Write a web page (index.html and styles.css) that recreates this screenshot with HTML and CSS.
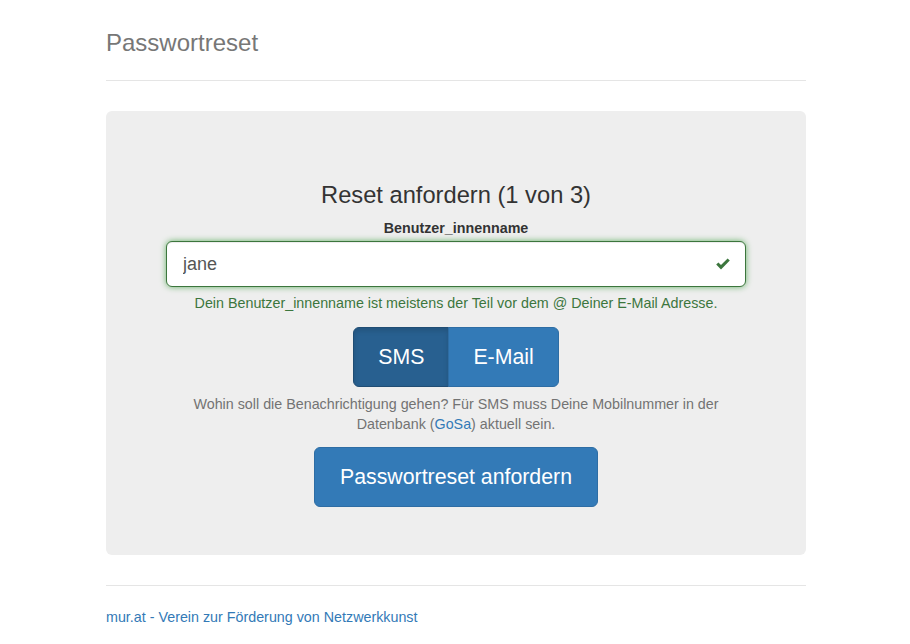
FILE: index.html
```html
<!DOCTYPE html>
<html lang="de">
<head>
<meta charset="utf-8">
<title>Passwortreset</title>
<link rel="stylesheet" href="styles.css">
</head>
<body>
<div class="container">
  <div class="header">
    <h3 class="title">Passwortreset</h3>
  </div>
  <div class="jumbotron">
    <h3 class="step">Reset anfordern (1 von 3)</h3>
    <div class="form-group first">
      <label class="label" for="user">Benutzer_innenname</label>
      <div class="input-wrap">
        <input id="user" class="input" type="text" value="jane">
        <span class="feedback">
          <svg width="16" height="14" viewBox="0 0 16 14"><path d="M1.2 7.6 L3.4 5.4 L6 8 L12.6 1.4 L14.8 3.6 L6 12.4 Z" fill="#3c763d"/></svg>
        </span>
      </div>
      <p class="help success">Dein Benutzer_innenname ist meistens der Teil vor dem @ Deiner E-Mail Adresse.</p>
    </div>
    <div class="form-group tight">
      <div class="btn-group">
        <button class="btn btn-primary active left" type="button">SMS</button><button class="btn btn-primary right" type="button">E-Mail</button>
      </div>
      <p class="help muted">Wohin soll die Benachrichtigung gehen? Für SMS muss Deine Mobilnummer in der Datenbank (<a href="#">GoSa</a>) aktuell sein.</p>
    </div>
    <button class="btn btn-primary" type="button">Passwortreset anfordern</button>
  </div>
  <footer class="footer">
    <p><a href="#">mur.at - Verein zur Förderung von Netzwerkkunst</a></p>
  </footer>
</div>
</body>
</html>
```
FILE: styles.css
```css
* { box-sizing: border-box; }
html, body { margin: 0; padding: 0; }
body {
  font-family: "Liberation Sans", Arial, Helvetica, sans-serif;
  font-size: 14.3px;
  line-height: 20px;
  color: #333;
  background: #fff;
  padding-top: 20px;
}
a { color: #337ab7; text-decoration: none; }
.container { width: 702px; padding-left: 2px; margin: 0 auto; }
.header {
  padding-top: 3px;
  padding-bottom: 17px;
  border-bottom: 1px solid #e5e5e5;
  margin-bottom: 30px;
}
.title {
  margin: 0;
  font-size: 24px;
  font-weight: 500;
  line-height: 40px;
  color: #777;
}
.jumbotron {
  background: #eee;
  border-radius: 6px;
  padding: 48px 60px 48px;
  margin-bottom: 30px;
  text-align: center;
}
.step {
  margin: 23px 0 10px;
  font-size: 23.7px;
  font-weight: 500;
  line-height: 1.1;
  color: #333;
}
.form-group { margin-bottom: 15px; }
.form-group.first { margin-bottom: 14px; }
.form-group.tight { margin-bottom: 13px; }
.label {
  display: block;
  font-weight: bold;
  margin-top: 2px;
  margin-bottom: 3px;
}
.input-wrap { position: relative; }
.input {
  display: block;
  width: 100%;
  height: 46px;
  padding: 10px 16px;
  font-family: inherit;
  font-size: 18px;
  line-height: 1.3333;
  color: #555;
  background: #fff;
  border: 1px solid #3c763d;
  border-radius: 6px;
  box-shadow: inset 0 1px 1px rgba(0,0,0,.075), 0 0 6px #67b168;
  outline: none;
}
.feedback {
  position: absolute;
  top: 0;
  right: 0;
  width: 46px;
  height: 46px;
  display: flex;
  align-items: center;
  justify-content: center;
}
.help { margin: 6px 0 0; }
.help.success { color: #3c763d; }
.help.muted { color: #737373; margin-top: 7px; }
.btn-group { display: inline-flex; }
.btn {
  font-family: inherit;
  font-size: 21.3px;
  line-height: 30px;
  padding: 14px 24.5px;
  border: 1px solid #2e6da4;
  border-radius: 6px;
  color: #fff;
  background: #337ab7;
  cursor: pointer;
}
.btn-group .btn { padding: 14px 24px; }
.btn.left { border-top-right-radius: 0; border-bottom-right-radius: 0; }
.btn.right { border-top-left-radius: 0; border-bottom-left-radius: 0; margin-left: -1px; }
.btn.active {
  background: #286090;
  border-color: #204d74;
  box-shadow: inset 0 3px 5px rgba(0,0,0,.125);
}
.footer {
  padding-top: 21px;
  border-top: 1px solid #e5e5e5;
  color: #777;
}
.footer p { margin: 0 0 10px; }
```
